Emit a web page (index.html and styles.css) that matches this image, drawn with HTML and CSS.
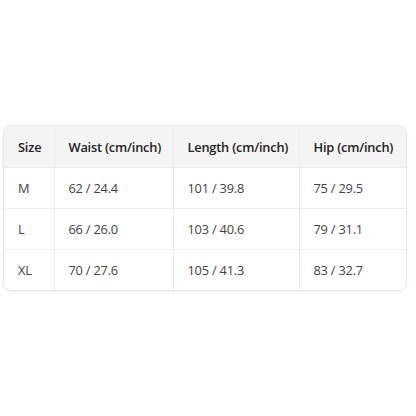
FILE: index.html
```html
<!DOCTYPE html>
<html>
<head>
<meta charset="utf-8">
<link rel="stylesheet" href="styles.css">
</head>
<body>
<div class="page">
  <div class="card">
    <table class="sizes">
      <colgroup>
        <col class="c1"><col class="c2"><col class="c3"><col class="c4">
      </colgroup>
      <thead>
        <tr><th>Size</th><th>Waist (cm/inch)</th><th>Length (cm/inch)</th><th>Hip (cm/inch)</th></tr>
      </thead>
      <tbody>
        <tr><td>M</td><td>62 / 24.4</td><td>101 / 39.8</td><td>75 / 29.5</td></tr>
        <tr><td>L</td><td>66 / 26.0</td><td>103 / 40.6</td><td>79 / 31.1</td></tr>
        <tr><td>XL</td><td>70 / 27.6</td><td>105 / 41.3</td><td>83 / 32.7</td></tr>
      </tbody>
    </table>
  </div>
</div>
</body>
</html>
```

FILE: styles.css
```css
html, body {
  margin: 0;
  padding: 0;
  background: #ffffff;
}
.page {
  width: 416px;
  height: 416px;
  display: flex;
  align-items: center;
  padding-left: 3px;
  box-sizing: border-box;
}
.card {
  width: 402px;
  border: 1px solid #e8e8e8;
  border-radius: 8px;
  overflow: hidden;
  box-shadow: 0 1px 3px rgba(0,0,0,0.06);
}
.sizes {
  width: 100%;
  border-collapse: collapse;
  table-layout: fixed;
  font-family: "Open Sans", "Noto Sans", sans-serif;
  font-size: 12.8px;
  letter-spacing: -0.2px;
}
.c1 { width: 50px; }
.c2 { width: 119px; }
.c3 { width: 126px; }
.c4 { width: auto; }
.sizes th, .sizes td {
  text-align: left;
  padding: 0 0 0 14px;
  border-right: 1px solid #ececec;
  border-bottom: 1px solid #ececec;
  white-space: nowrap;
}
.sizes th:last-child, .sizes td:last-child { border-right: none; }
.sizes tbody tr:last-child td { border-bottom: none; }
.sizes th {
  height: 41px;
  background: #f4f4f4;
  color: #222;
  font-weight: 600;
}
.sizes td {
  height: 40px;
  color: #444;
  font-weight: 400;
}
```
